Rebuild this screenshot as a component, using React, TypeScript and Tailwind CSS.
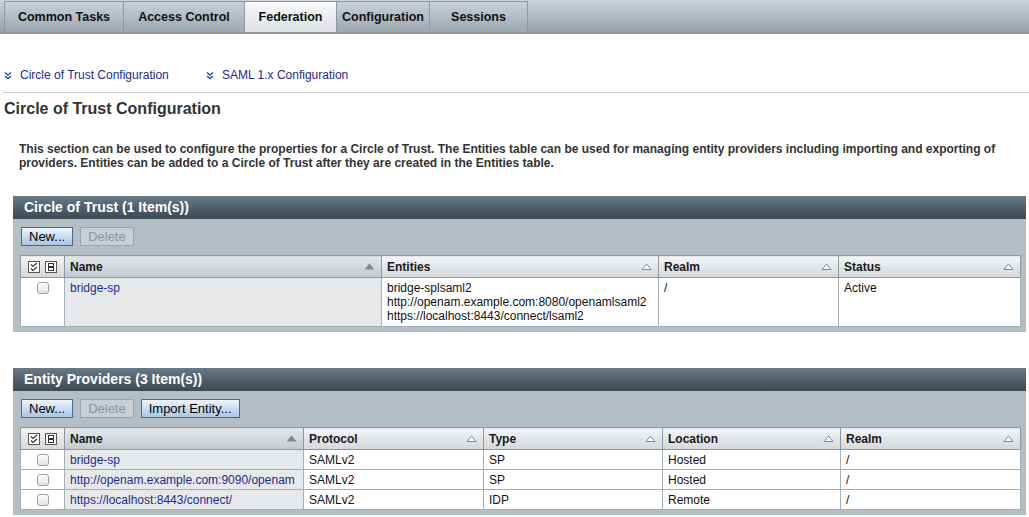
import React from 'react';

const font = { fontFamily: '"Liberation Sans", Arial, sans-serif' };

const tabs = ['Common Tasks', 'Access Control', 'Federation', 'Configuration', 'Sessions'];
const tabWidths = ['w-[120px]', 'w-[121px]', 'w-[92px]', 'w-[93px]', 'w-[98px]'];

const DoubleChevron = () => (
  <svg width="8" height="9" viewBox="0 0 8 9" className="shrink-0">
    <path d="M1 1.5 L4 4 L7 1.5" stroke="#2a4aa8" strokeWidth="1.4" fill="none" />
    <path d="M1 5 L4 7.5 L7 5" stroke="#2a4aa8" strokeWidth="1.4" fill="none" />
  </svg>
);

const SelectAllIcon = () => (
  <svg width="12" height="12" viewBox="0 0 12 12">
    <rect x="0.5" y="0.5" width="11" height="11" fill="#fff" stroke="#555" />
    <path d="M3 3.5 L5 5.5 L9 2" stroke="#333" strokeWidth="1.2" fill="none" />
    <path d="M3 7.5 L5 9.5 L9 6" stroke="#333" strokeWidth="1.2" fill="none" />
  </svg>
);

const DeselectAllIcon = () => (
  <svg width="12" height="12" viewBox="0 0 12 12">
    <rect x="0.5" y="0.5" width="11" height="11" fill="#fff" stroke="#555" />
    <rect x="3.5" y="2.5" width="5" height="3" fill="none" stroke="#333" />
    <rect x="3.5" y="6.5" width="5" height="3" fill="none" stroke="#333" />
  </svg>
);

const SortArrow = ({ active }: { active?: boolean }) => (
  <svg width="11" height="7" viewBox="0 0 11 7" className="shrink-0">
    {active ? (
      <path d="M0.5 6.5 L5.5 0.5 L10.5 6.5 Z" fill="#7d8a94" />
    ) : (
      <path d="M1 6.5 L5.5 1 L10 6.5 Z" fill="#fff" stroke="#7d8a94" />
    )}
  </svg>
);

const Checkbox = () => (
  <div className="w-[12px] h-[12px] rounded-[3px] border border-[#9aa0a6] bg-gradient-to-b from-[#ffffff] to-[#e4e4e4] mx-auto" />
);

const Btn = ({ label, disabled }: { label: string; disabled?: boolean }) => (
  <button
    className={`h-[19px] px-[7px] text-[13px] leading-none border ${
      disabled
        ? 'bg-[#c8cfd4] border-[#9aa3a9] text-[#8a949b]'
        : 'bg-gradient-to-b from-[#eef5fc] to-[#a8c6e4] border-[#47698c] text-black'
    }`}
  >
    {label}
  </button>
);

type Col = { label: string; width: string; active?: boolean };

const Panel = ({
  title,
  buttons,
  cols,
  rows,
  rowH,
}: {
  title: string;
  buttons: React.ReactNode;
  cols: Col[];
  rows: string[][];
  rowH: string;
}) => (
  <div className="mx-[13px] w-[1013px] bg-[#b3bec5]">
    <div className="h-[23px] bg-gradient-to-b from-[#687a86] to-[#3b4953] flex items-center px-[11px] text-white font-bold text-[14px]">
      {title}
    </div>
    <div className="flex gap-[7px] px-[8px] pt-[8px] pb-[9px]">{buttons}</div>
    <div className="px-[7px] pb-[5px]">
      <table className="table-fixed border-collapse w-[1000px] text-[12px] text-[#111]">
        <colgroup>
          <col className="w-[44px]" />
          {cols.map((c) => (
            <col key={c.label} className={c.width} />
          ))}
        </colgroup>
        <thead>
          <tr className="h-[22px]">
            <th className="border border-[#8c99a2] bg-gradient-to-b from-[#f4f5f6] to-[#d3d8dc] p-0">
              <div className="flex items-center justify-center gap-[5px]">
                <SelectAllIcon />
                <DeselectAllIcon />
              </div>
            </th>
            {cols.map((c) => (
              <th
                key={c.label}
                className={`border border-[#8c99a2] p-0 text-left ${
                  c.active
                    ? 'bg-gradient-to-b from-[#e4e7ea] to-[#c3cacf]'
                    : 'bg-gradient-to-b from-[#f4f5f6] to-[#d3d8dc]'
                }`}
              >
                <div className="flex items-center justify-between pl-[5px] pr-[6px] font-bold text-[12px] text-[#1a1a1a]">
                  <span>{c.label}</span>
                  <SortArrow active={c.active} />
                </div>
              </th>
            ))}
          </tr>
        </thead>
        <tbody>
          {rows.map((r, i) => (
            <tr key={i} className={rowH}>
              <td className="border border-[#a4afb6] bg-white align-top pt-[4px]">
                <Checkbox />
              </td>
              {r.map((cell, j) => (
                <td
                  key={j}
                  className={`border border-[#a4afb6] align-top px-[5px] pt-[3px] leading-[14px] overflow-hidden whitespace-nowrap ${
                    j === 0 ? 'bg-[#e7e8e9] text-[#1b2d8f]' : 'bg-white'
                  }`}
                >
                  {cell.split('\n').map((line, k) => (
                    <div key={k}>{line}</div>
                  ))}
                </td>
              ))}
            </tr>
          ))}
        </tbody>
      </table>
    </div>
  </div>
);

export default function App() {
  return (
    <div className="w-[1029px] h-[517px] bg-white overflow-hidden" style={font}>
      {/* Tabs */}
      <div className="h-[34px] bg-gradient-to-b from-[#cdd3da] to-[#98a2ac] border-b-[2px] border-[#8c96a1] flex items-end pl-[4px]">
        {tabs.map((t, i) => (
          <div
            key={t}
            className={`${tabWidths[i]} h-[31px] border-t border-r border-[#8e98a2] first:border-l flex items-center justify-center font-bold text-[12.5px] text-[#111] ${
              t === 'Federation'
                ? 'bg-gradient-to-b from-[#f7f8f9] to-[#dde1e5]'
                : 'bg-gradient-to-b from-[#c9d0d7] to-[#9ea8b2]'
            }`}
          >
            {t}
          </div>
        ))}
      </div>

      {/* Jump links */}
      <div className="flex items-center h-[20px] mt-[31px] pl-[4px] text-[12px] text-[#1b2a8c]">
        <div className="flex items-center gap-[8px] w-[202px]">
          <DoubleChevron />
          <span>Circle of Trust Configuration</span>
        </div>
        <div className="flex items-center gap-[8px]">
          <DoubleChevron />
          <span>SAML 1.x Configuration</span>
        </div>
      </div>
      <div className="ml-[3px] mt-[7px] h-px bg-[#c9cdd1]" />

      <h1 className="mt-[6px] pl-[4px] text-[16px] font-bold text-[#333] leading-[20px]">
        Circle of Trust Configuration
      </h1>

      <p className="mt-[23px] pl-[19px] text-[12px] font-bold text-[#333] leading-[14px]">
        This section can be used to configure the properties for a Circle of Trust. The Entities table can be used for managing entity providers including importing and exporting of
        <br />
        providers. Entities can be added to a Circle of Trust after they are created in the Entities table.
      </p>

      <div className="mt-[26px]">
        <Panel
          title="Circle of Trust (1 Item(s))"
          buttons={
            <>
              <Btn label="New..." />
              <Btn label="Delete" disabled />
            </>
          }
          cols={[
            { label: 'Name', width: 'w-[317px]', active: true },
            { label: 'Entities', width: 'w-[277px]' },
            { label: 'Realm', width: 'w-[180px]' },
            { label: 'Status', width: 'w-[182px]' },
          ]}
          rows={[
            [
              'bridge-sp',
              'bridge-splsaml2\nhttp://openam.example.com:8080/openamlsaml2\nhttps://localhost:8443/connect/lsaml2',
              '/',
              'Active',
            ],
          ]}
          rowH="h-[49px]"
        />
      </div>

      <div className="mt-[36px]">
        <Panel
          title="Entity Providers (3 Item(s))"
          buttons={
            <>
              <Btn label="New..." />
              <Btn label="Delete" disabled />
              <Btn label="Import Entity..." />
            </>
          }
          cols={[
            { label: 'Name', width: 'w-[239px]', active: true },
            { label: 'Protocol', width: 'w-[180px]' },
            { label: 'Type', width: 'w-[179px]' },
            { label: 'Location', width: 'w-[178px]' },
            { label: 'Realm', width: 'w-[180px]' },
          ]}
          rows={[
            ['bridge-sp', 'SAMLv2', 'SP', 'Hosted', '/'],
            ['http://openam.example.com:9090/openam', 'SAMLv2', 'SP', 'Hosted', '/'],
            ['https://localhost:8443/connect/', 'SAMLv2', 'IDP', 'Remote', '/'],
          ]}
          rowH="h-[20px]"
        />
      </div>
    </div>
  );
}
